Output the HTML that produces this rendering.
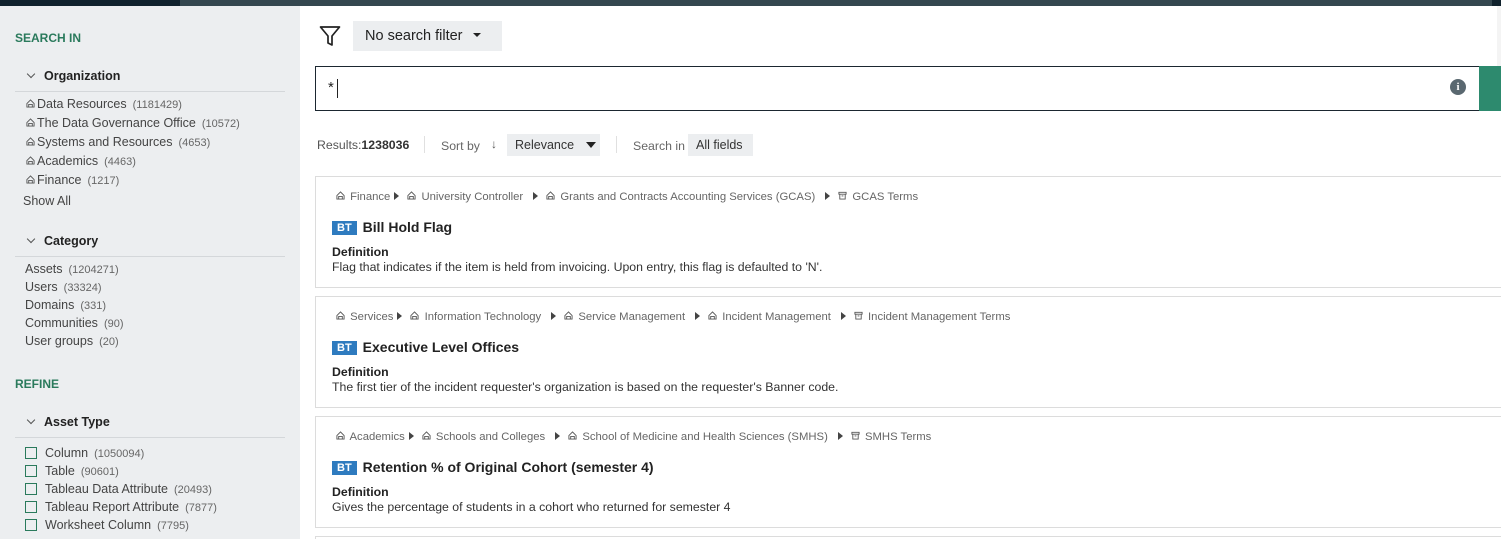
<!DOCTYPE html>
<html style="height:539px;overflow:hidden"><head><style>
*{margin:0;padding:0;box-sizing:border-box}
body{width:1501px;height:539px;overflow:hidden;font-family:"Liberation Sans",sans-serif;background:#fff;position:relative;color:#333}
.abs{position:absolute}
.top{left:0;top:0;width:1501px;height:6px;background:#34474f}
.side{left:0;top:6px;width:300px;height:533px;background:#eceef0}
.h{color:#2a7a5c;font-weight:bold;font-size:12px}
.grp{font-weight:bold;font-size:12.5px;color:#222}
.chev{display:inline-block;width:6px;height:6px;border-right:1px solid #555;border-bottom:1px solid #555;transform:rotate(45deg);margin-right:10px;position:relative;top:-3px}
.line{height:1px;background:#d4d7da}
.it{font-size:12.5px;color:#444;white-space:nowrap;height:19px}
.it .c{color:#666;font-size:11px;margin-left:6px}
.oi{display:inline-block;width:9px;height:9px;margin-right:2px;vertical-align:0}
.cb{display:inline-block;width:12px;height:12px;border:1px solid #2a7a5c;margin-right:8px;vertical-align:-2px}
.card{left:315px;width:1190px;height:112px;border:1px solid #dcdcdc;background:#fff}
.bc{position:absolute;left:20px;top:14px;font-size:11.3px;color:#666;white-space:nowrap}
.tri{display:inline-block;width:0;height:0;border-left:5px solid #444;border-top:4px solid transparent;border-bottom:4px solid transparent;margin:0 8px 0 4px}
.ti{position:absolute;left:16px;top:42px;font-size:14px;font-weight:bold;color:#222}
.bt{display:inline-block;background:#2e7bbf;color:#fff;font-size:11px;padding:1px 5px;margin-right:6px;vertical-align:1px}
.df{position:absolute;left:16px;top:68px;font-size:12.3px;color:#333;line-height:15px}
.df b{color:#222}
</style></head><body>
<svg width="0" height="0" style="position:absolute"><defs>
<symbol id="o" viewBox="0 0 10 10"><path d="M5 1L1 5v4h8V5z M3 9V6h4v3" fill="none" stroke="#555" stroke-width="1"/></symbol>
<symbol id="d" viewBox="0 0 10 10"><path d="M1 1.5h8v2H1z M2 3.5v5.5h6V3.5 M4 5.5h2" fill="none" stroke="#555" stroke-width="1"/></symbol>
</defs></svg>
<div class="abs top"></div>
<div class="abs" style="left:0;top:0;width:180px;height:6px;background:#10222d"></div>
<div class="abs side"></div>
<div class="abs h" style="left:15px;top:31px">SEARCH IN</div>
<div class="abs grp" style="left:28px;top:69px"><span class="chev"></span>Organization</div>
<div class="abs line" style="left:15px;top:91px;width:270px"></div>
<div class="abs" style="left:26px;top:97px">
<div class="it"><svg class="oi"><use href="#o"/></svg>Data Resources<span class="c">(1181429)</span></div>
<div class="it"><svg class="oi"><use href="#o"/></svg>The Data Governance Office<span class="c">(10572)</span></div>
<div class="it"><svg class="oi"><use href="#o"/></svg>Systems and Resources<span class="c">(4653)</span></div>
<div class="it"><svg class="oi"><use href="#o"/></svg>Academics<span class="c">(4463)</span></div>
<div class="it"><svg class="oi"><use href="#o"/></svg>Finance<span class="c">(1217)</span></div>
</div>
<div class="abs it" style="left:23px;top:194px">Show All</div>
<div class="abs grp" style="left:28px;top:234px"><span class="chev"></span>Category</div>
<div class="abs line" style="left:15px;top:256px;width:270px"></div>
<div class="abs" style="left:25px;top:262px">
<div class="it" style="height:18px">Assets<span class="c">(1204271)</span></div>
<div class="it" style="height:18px">Users<span class="c">(33324)</span></div>
<div class="it" style="height:18px">Domains<span class="c">(331)</span></div>
<div class="it" style="height:18px">Communities<span class="c">(90)</span></div>
<div class="it" style="height:18px">User groups<span class="c">(20)</span></div>
</div>
<div class="abs h" style="left:15px;top:377px">REFINE</div>
<div class="abs grp" style="left:28px;top:415px"><span class="chev"></span>Asset Type</div>
<div class="abs line" style="left:15px;top:437px;width:270px"></div>
<div class="abs" style="left:25px;top:446px">
<div class="it" style="height:18px"><span class="cb"></span>Column<span class="c">(1050094)</span></div>
<div class="it" style="height:18px"><span class="cb"></span>Table<span class="c">(90601)</span></div>
<div class="it" style="height:18px"><span class="cb"></span>Tableau Data Attribute<span class="c">(20493)</span></div>
<div class="it" style="height:18px"><span class="cb"></span>Tableau Report Attribute<span class="c">(7877)</span></div>
<div class="it" style="height:18px"><span class="cb"></span>Worksheet Column<span class="c">(7795)</span></div>
</div>

<svg class="abs" style="left:319px;top:25px" width="22" height="22" viewBox="0 0 22 22"><path d="M1.5 2h19l-7.5 9v9l-4-2v-7z" fill="none" stroke="#222" stroke-width="1.7" stroke-linejoin="round"/></svg>
<div class="abs" style="left:353px;top:21px;width:149px;height:30px;background:#eceef0;font-size:14.5px;color:#222;padding:7px 0 0 12px">No search filter <span style="display:inline-block;border-top:4px solid #222;border-left:4px solid transparent;border-right:4px solid transparent;margin-left:6px;vertical-align:3px"></span></div>

<div class="abs" style="left:315px;top:66px;width:1165px;height:45px;border:1.5px solid #1b2730"></div>
<div class="abs" style="left:328px;top:79px;font-size:15px;color:#222">*</div>
<div class="abs" style="left:337px;top:79px;width:1px;height:19px;background:#222"></div>
<div class="abs" style="left:1450px;top:79px;width:16px;height:16px;border-radius:50%;background:#5a6870;color:#fff;font-size:11px;font-weight:bold;text-align:center;line-height:16px;font-family:'Liberation Serif',serif">i</div>
<div class="abs" style="left:1479px;top:66px;width:22px;height:45px;background:#2d8a6e"></div>
<div class="abs" style="left:1497px;top:6px;width:4px;height:60px;background:#f4f4f4"></div>
<div class="abs" style="left:1492px;top:0;width:9px;height:6px;background:#10222d"></div>

<div class="abs" style="left:317px;top:138px;font-size:12.3px;color:#555">Results:<b style="color:#333">1238036</b></div>
<div class="abs" style="left:424px;top:136px;width:1px;height:17px;background:#e0e0e0"></div>
<div class="abs" style="left:441px;top:139px;font-size:12.3px;color:#666">Sort by</div>
<div class="abs" style="left:491px;top:137px;font-size:12px;color:#555;font-weight:bold">↓</div>
<div class="abs" style="left:507px;top:134px;width:93px;height:22px;background:#eceef0;font-size:12.5px;color:#333;padding:4px 0 0 8px">Relevance <span style="display:inline-block;border-top:6px solid #222;border-left:5px solid transparent;border-right:5px solid transparent;margin-left:8px;vertical-align:1px"></span></div>
<div class="abs" style="left:616px;top:136px;width:1px;height:17px;background:#e0e0e0"></div>
<div class="abs" style="left:633px;top:139px;font-size:12.3px;color:#666">Search in</div>
<div class="abs" style="left:688px;top:134px;width:65px;height:22px;background:#eceef0;font-size:12.5px;color:#333;padding:4px 0 0 8px">All fields</div>

<div class="abs card" style="top:176px">
<div class="bc"><svg class="oi"><use href="#o"/></svg> Finance<span class="tri"></span><svg class="oi"><use href="#o"/></svg> University Controller<span class="tri" style="margin-left:10px"></span><svg class="oi"><use href="#o"/></svg> Grants and Contracts Accounting Services (GCAS)<span class="tri" style="margin-left:10px"></span><svg class="oi"><use href="#d"/></svg> GCAS Terms</div>
<div class="ti"><span class="bt">BT</span>Bill Hold Flag</div>
<div class="df"><b>Definition</b><br>Flag that indicates if the item is held from invoicing. Upon entry, this flag is defaulted to 'N'.</div>
</div>
<div class="abs card" style="top:296px">
<div class="bc"><svg class="oi"><use href="#o"/></svg> Services<span class="tri"></span><svg class="oi"><use href="#o"/></svg> Information Technology<span class="tri" style="margin-left:10px"></span><svg class="oi"><use href="#o"/></svg> Service Management<span class="tri" style="margin-left:10px"></span><svg class="oi"><use href="#o"/></svg> Incident Management<span class="tri" style="margin-left:10px"></span><svg class="oi"><use href="#d"/></svg> Incident Management Terms</div>
<div class="ti"><span class="bt">BT</span>Executive Level Offices</div>
<div class="df"><b>Definition</b><br>The first tier of the incident requester's organization is based on the requester's Banner code.</div>
</div>
<div class="abs card" style="top:416px">
<div class="bc"><svg class="oi"><use href="#o"/></svg> Academics<span class="tri"></span><svg class="oi"><use href="#o"/></svg> Schools and Colleges<span class="tri" style="margin-left:10px"></span><svg class="oi"><use href="#o"/></svg> School of Medicine and Health Sciences (SMHS)<span class="tri" style="margin-left:10px"></span><svg class="oi"><use href="#d"/></svg> SMHS Terms</div>
<div class="ti"><span class="bt">BT</span>Retention % of Original Cohort (semester 4)</div>
<div class="df"><b>Definition</b><br>Gives the percentage of students in a cohort who returned for semester 4</div>
</div>
<div class="abs card" style="top:536px;height:3px;border-bottom:none"></div>
</body></html>
